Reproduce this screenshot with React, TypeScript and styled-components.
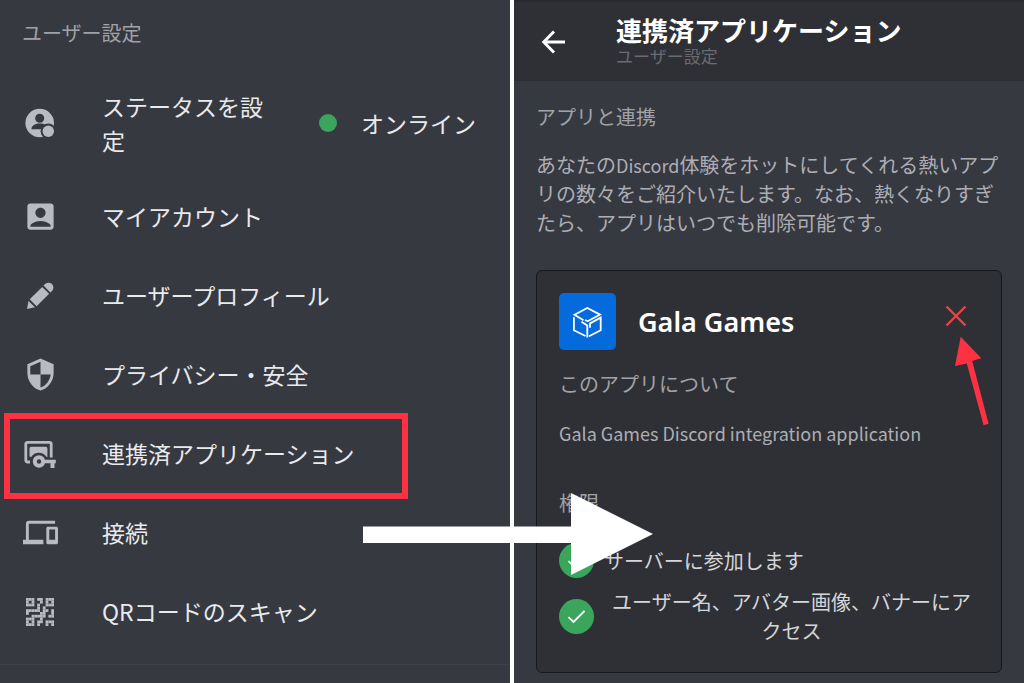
import React from "react";
import styled, { createGlobalStyle } from "styled-components";
import { MdAccountBox, MdDevices, MdSecurity } from "react-icons/md";

const GlobalStyle = createGlobalStyle`
  *, *::before, *::after { box-sizing: border-box; }
  body {
    margin: 0;
    background: #373941;
    color: #e9eaec;
    font-family: "Noto Sans CJK JP", "Noto Sans", sans-serif;
  }
  h1, h2, h3, p, ul { margin: 0; padding: 0; font-weight: 400; }
  ul { list-style: none; }
  button {
    border: 0;
    padding: 0;
    background: none;
    color: inherit;
    font: inherit;
    cursor: pointer;
  }
  svg { display: block; }
`;

const Page = styled.div`
  position: relative;
  display: grid;
  grid-template-columns: minmax(0, 1fr) 4px minmax(0, 1fr);
  min-height: 100vh;
  overflow: hidden;
`;

const Divider = styled.div`
  background: #ffffff;
`;

const SettingsPane = styled.nav`
  background: #373941;
`;

const SectionTitle = styled.h2`
  font-size: 20px;
  line-height: 30px;
  color: #a0a2a8;
`;

const PaneHeading = styled.div`
  padding: 18px 22px 21px;
`;

const Menu = styled.ul`
  padding-bottom: 13px;
  border-bottom: 1px solid #3e4048;
`;

const MenuItem = styled.li`
  position: relative;
`;

const MenuButton = styled.button<{ $tall?: boolean }>`
  display: flex;
  align-items: center;
  width: 100%;
  height: ${(p) => (p.$tall ? 108 : 79)}px;
  padding: 0 34px 0 22px;
  text-align: left;
`;

const IconBox = styled.span`
  display: grid;
  place-items: center;
  flex: none;
  width: 36px;
  height: 36px;
  margin-right: 44px;
  color: #b9bbc0;
`;

const MenuLabel = styled.span`
  flex: 1;
  padding-bottom: 1px;
  font-size: 23px;
  line-height: 34px;
`;

const StatusValue = styled.span`
  display: flex;
  align-items: center;
  gap: 24px;
  margin-left: 54px;
  font-size: 23px;
  line-height: 34px;
`;

const OnlineDot = styled.span`
  width: 18px;
  height: 18px;
  border-radius: 50%;
  background: #3ba55d;
`;

const Highlight = styled.span`
  position: absolute;
  top: -1px;
  bottom: -6px;
  left: 4px;
  width: 404px;
  border: 6px solid #fc3142;
  pointer-events: none;
`;

const DetailPane = styled.main`
  background: #373941;
`;

const TopBar = styled.header`
  display: flex;
  align-items: center;
  gap: 48px;
  height: 81px;
  padding: 0 26px;
  border-top: 2px solid #2a2b30;
  background: #2f3035;
`;

const BackButton = styled.button`
  width: 28px;
  height: 28px;
  color: #ffffff;
`;

const AppBarTitle = styled.h1`
  font-size: 26px;
  font-weight: 700;
  line-height: 28px;
  color: #ffffff;
`;

const AppBarSubtitle = styled.p`
  font-size: 17px;
  line-height: 24px;
  color: #696b72;
`;

const Content = styled.div`
  padding: 21px 22px 10px;
`;

const Intro = styled.div`
  display: grid;
  gap: 18px;
  padding-bottom: 33px;
`;

const BodyText = styled.p`
  font-size: 20px;
  line-height: 29px;
  color: #acaeb4;
`;

const Latin = styled.span`
  font-size: 18px;
  line-height: 1;
`;

const Card = styled.section`
  padding: 22px;
  border: 1px solid #17181b;
  border-radius: 6px;
  background: #2f3035;
`;

const CardHeader = styled.div`
  display: flex;
  align-items: center;
  gap: 22px;
  margin-bottom: 19px;
`;

const AppLogo = styled.span`
  flex: none;
  width: 57px;
  height: 57px;
  border-radius: 5px;
  background: #056bdc;
`;

const AppName = styled.h3`
  flex: 1;
  font-family: "Noto Sans", sans-serif;
  font-size: 27px;
  font-weight: 600;
  line-height: 36px;
  color: #ffffff;
`;

const RemoveButton = styled.button`
  align-self: flex-start;
  width: 24px;
  height: 24px;
  margin: 11px 11px 0 0;
  color: #ed4245;
`;

const About = styled.div`
  display: grid;
  gap: 19px;
  padding-bottom: 41px;
`;

const Permissions = styled.ul`
  display: grid;
  gap: 9px;
  padding: 25px 0 5px;
`;

const Permission = styled.li`
  display: flex;
  align-items: center;
  gap: 10px;
  font-size: 20px;
  line-height: 29px;
  color: #d5d6d9;
  text-align: center;
`;

const CheckBadge = styled.span`
  flex: none;
  width: 35px;
  height: 35px;
  border-radius: 50%;
  background: #3ba55d;
`;

const StepArrow = styled.svg`
  position: absolute;
  top: 493px;
  left: calc(50% - 149px);
  pointer-events: none;
`;

const RemoveArrow = styled.svg`
  position: absolute;
  top: 336px;
  right: 34px;
  pointer-events: none;
`;

const StatusIcon = () => (
  <svg width="36" height="36" viewBox="0 0 36 36" fill="currentColor">
    <mask id="status-cut">
      <rect width="36" height="36" fill="#fff" />
      <circle cx="17.7" cy="13.3" r="4.5" fill="#000" />
      <path d="M9.4 24.2c0-3.8 4.2-5.7 8.4-5.7s8.4 1.9 8.4 5.7z" fill="#000" />
      <circle cx="26.3" cy="26.3" r="7.7" fill="#000" />
    </mask>
    <circle cx="17.7" cy="18" r="14.3" mask="url(#status-cut)" />
    <circle cx="26.3" cy="26.3" r="5.7" />
  </svg>
);

const PencilIcon = () => (
  <svg width="36" height="36" viewBox="0 0 36 36" fill="currentColor">
    <path d="M5 31l1.500-8 6.500 6.300z" />
    <path d="M7.700 21.300L20.200 8.900l6.900 6.900-12.500 12.400z" />
    <path d="M21.500 7.600l1.900-1.900c2.300-1.700 5-1.100 6.600.4 1.500 1.600 2.100 4.300.4 6.500l-2 1.900z" />
  </svg>
);

const AppKeyIcon = () => (
  <svg width="36" height="36" viewBox="0 0 36 36">
    <path
      d="M8 26H5.500a1.700 1.700 0 0 1-1.700-1.700V8a1.700 1.700 0 0 1 1.700-1.700h22a1.700 1.700 0 0 1 1.700 1.700v13.500"
      fill="none"
      stroke="currentColor"
      strokeWidth="2.8"
    />
    <path
      d="M7.500 20.500v-8.200a1.600 1.600 0 0 1 1.600-1.600h14.700a1.600 1.600 0 0 1 1.600 1.600v8.700h-.8a9 9 0 0 0-15.400 0z"
      fill="currentColor"
    />
    <circle cx="17" cy="25.5" r="4.2" fill="none" stroke="currentColor" strokeWidth="4" />
    <path d="M22.500 23.800h11.300v3.400h-1.300v4.800h-4v-4.800h-6z" fill="currentColor" />
  </svg>
);

const QR_ROWS = [
  "###.##.###",
  "#.#..#.#.#",
  "###.#..###",
  "....#.#...",
  "#####.##.#",
  "#....##..#",
  "..#####.##",
  "###..#....",
  "#.#.##.###",
  "###.#..#.#",
];

const QrIcon = () => (
  <svg width="28" height="28" viewBox="0 0 10 10" fill="currentColor">
    {QR_ROWS.flatMap((row, y) =>
      [...row].map((cell, x) =>
        cell === "#" ? <rect key={`${x}-${y}`} x={x} y={y} width="1" height="1" /> : null,
      ),
    )}
  </svg>
);

const CubeLogo = () => (
  <svg width="57" height="57" viewBox="0 0 57 57" fill="none" stroke="#fff" strokeWidth="1.8">
    <path d="M24.500 27.300L15.500 21.800 28.300 15 41 21.600 31.500 26.800 28.500 28.300 26 27" />
    <path d="M26.500 43L14.900 37.300V24.200" />
    <path d="M28.300 44.500V32.500L22.500 28.800" />
    <path d="M30 43.300L41.700 37.300V24.600L31 30.400V34.800" />
  </svg>
);

const CheckIcon = () => (
  <svg width="35" height="35" viewBox="0 0 35 35" fill="none" stroke="#fff" strokeWidth="1.8">
    <path d="M9.500 18.200l5 4.800L25.500 12" />
  </svg>
);

type Entry = { label: string; icon: React.ReactNode; online?: boolean; marked?: boolean };

const ENTRIES: Entry[] = [
  { label: "ステータスを設定", icon: <StatusIcon />, online: true },
  { label: "マイアカウント", icon: <MdAccountBox size={35} /> },
  { label: "ユーザープロフィール", icon: <PencilIcon /> },
  { label: "プライバシー・安全", icon: <MdSecurity size={35} /> },
  { label: "連携済アプリケーション", icon: <AppKeyIcon />, marked: true },
  { label: "接続", icon: <MdDevices size={35} /> },
  { label: "QRコードのスキャン", icon: <QrIcon /> },
];

const PERMISSIONS = ["サーバーに参加します", "ユーザー名、アバター画像、バナーにアクセス"];

export default function App() {
  return (
    <Page lang="ja">
      <GlobalStyle />
      <SettingsPane>
        <PaneHeading>
          <SectionTitle>ユーザー設定</SectionTitle>
        </PaneHeading>
        <Menu>
          {ENTRIES.map((entry) => (
            <MenuItem key={entry.label}>
              <MenuButton type="button" $tall={entry.online}>
                <IconBox>{entry.icon}</IconBox>
                <MenuLabel>{entry.label}</MenuLabel>
                {entry.online && (
                  <StatusValue>
                    <OnlineDot />
                    オンライン
                  </StatusValue>
                )}
              </MenuButton>
              {entry.marked && <Highlight />}
            </MenuItem>
          ))}
        </Menu>
      </SettingsPane>
      <Divider />
      <DetailPane>
        <TopBar>
          <BackButton type="button" aria-label="戻る">
            <svg width="28" height="28" viewBox="0 0 28 28" fill="none" stroke="currentColor" strokeWidth="2.9">
              <path d="M25 14H4M14 3.500L3.700 14 14 24.500" />
            </svg>
          </BackButton>
          <div>
            <AppBarTitle>連携済アプリケーション</AppBarTitle>
            <AppBarSubtitle>ユーザー設定</AppBarSubtitle>
          </div>
        </TopBar>
        <Content>
          <Intro>
            <SectionTitle>アプリと連携</SectionTitle>
            <BodyText>
              あなたの<Latin>Discord</Latin>体験をホットにしてくれる熱いアプリの数々をご紹介いたします。なお、熱くなりすぎたら、アプリはいつでも削除可能です。
            </BodyText>
          </Intro>
          <Card>
            <CardHeader>
              <AppLogo>
                <CubeLogo />
              </AppLogo>
              <AppName>Gala Games</AppName>
              <RemoveButton type="button" aria-label="削除">
                <svg width="24" height="24" viewBox="0 0 24 24" fill="none" stroke="currentColor" strokeWidth="2.4">
                  <path d="M2.500 2.500l19 19M21.500 2.500l-19 19" />
                </svg>
              </RemoveButton>
            </CardHeader>
            <About>
              <SectionTitle>このアプリについて</SectionTitle>
              <BodyText>
                <Latin>Gala Games Discord integration application</Latin>
              </BodyText>
            </About>
            <SectionTitle>権限</SectionTitle>
            <Permissions>
              {PERMISSIONS.map((text) => (
                <Permission key={text}>
                  <CheckBadge>
                    <CheckIcon />
                  </CheckBadge>
                  <span>{text}</span>
                </Permission>
              ))}
            </Permissions>
          </Card>
        </Content>
      </DetailPane>
      <StepArrow width="290" height="82" viewBox="0 0 290 82" fill="#fff" aria-hidden="true">
        <path d="M0 33.500H208V0L290 41 208 82V50H0z" />
      </StepArrow>
      <RemoveArrow width="36" height="90" viewBox="0 0 36 90" fill="#fc3142" aria-hidden="true">
        <path d="M6.700.7L27.300 22.300 18.200 25 34.600 87.800 29.600 89.200 12.800 27.500 1 30z" />
      </RemoveArrow>
    </Page>
  );
}
